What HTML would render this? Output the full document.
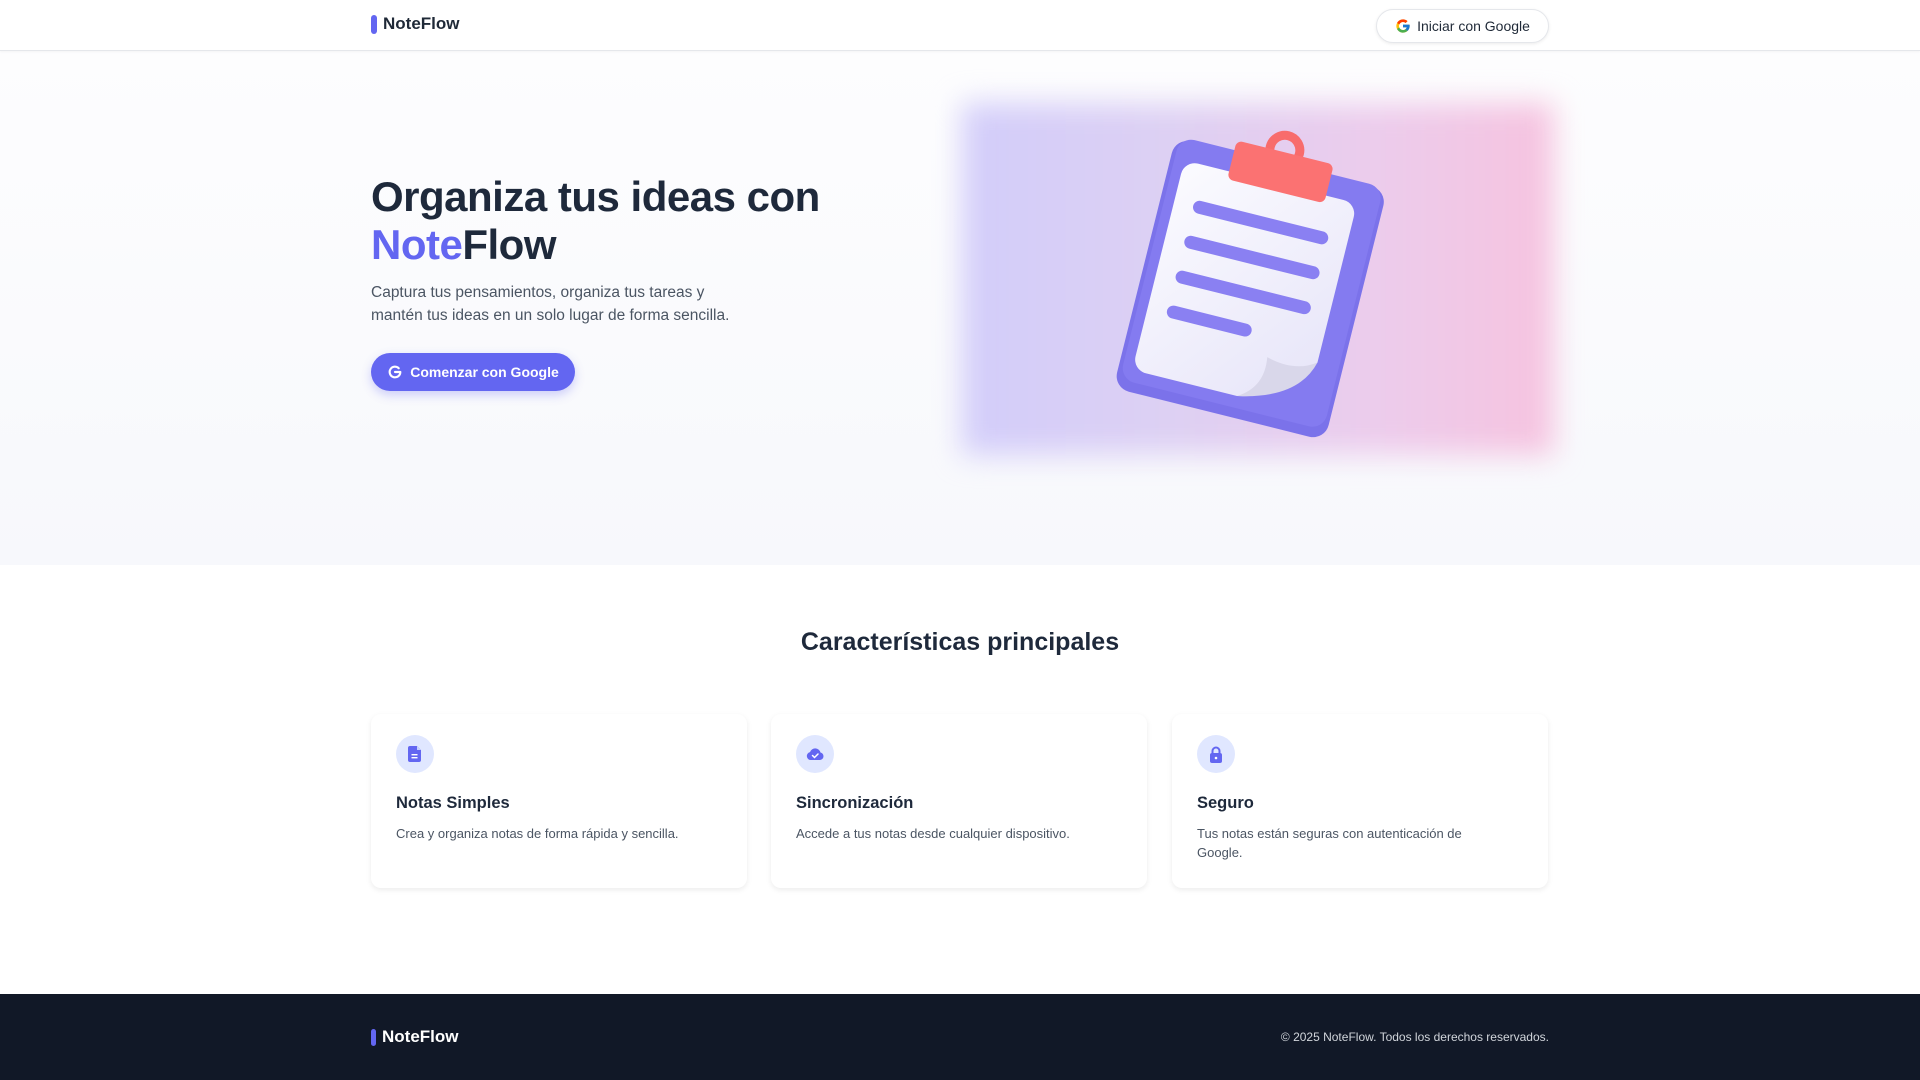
<!DOCTYPE html>
<html><head><meta charset="utf-8"><style>
*{margin:0;padding:0;box-sizing:border-box}
body{width:1920px;height:1080px;overflow:hidden;font-family:"Liberation Sans",sans-serif;background:#fff;color:#1f2937;position:relative}
.nav{position:absolute;left:0;top:0;width:1920px;height:51px;background:#fff;border-bottom:1px solid #e5e7eb;box-shadow:0 1px 2px rgba(0,0,0,.04);z-index:2}
.logo{position:absolute;display:flex;align-items:center;font-weight:bold;font-size:17px;color:#1f2937}
.logo i{display:inline-block;width:6px;height:19px;background:#6366f1;border-radius:3px;margin-right:6px}
.btn1{position:absolute;left:1376px;top:9px;width:173px;height:34px;border:1px solid #e5e7eb;border-radius:17px;background:#fff;box-shadow:0 1px 3px rgba(0,0,0,.08);display:flex;align-items:center;justify-content:center;font-size:14px;color:#1f2937}
.btn1 svg{margin-right:6px}
.hero{position:absolute;left:0;top:51px;width:1920px;height:514px;background:linear-gradient(180deg,#fdfdfe,#f7f8fc)}
h1{position:absolute;left:371px;top:173px;font-size:42px;line-height:48px;font-weight:bold;color:#1e293b;letter-spacing:-0.5px}
h1 span{color:#6366f1}
.p{position:absolute;left:371px;top:282px;font-size:15.5px;line-height:22.5px;color:#4b5563;width:385px}
.cta{position:absolute;left:371px;top:353px;width:204px;height:38px;border-radius:19px;background:#6366f1;color:#fff;font-size:14px;font-weight:bold;display:flex;align-items:center;justify-content:center;box-shadow:0 4px 10px rgba(99,102,241,.3)}
.cta svg{margin-right:7px}
.blur{position:absolute;left:962px;top:103px;width:592px;height:352px;background:linear-gradient(90deg,#d2cdfa 0%,#ddd0f3 35%,#ecccec 70%,#f6c3df 100%);filter:blur(14px)}
h2{position:absolute;left:0;width:1920px;text-align:center;top:628px;font-size:25px;font-weight:bold;color:#1e293b}
.card{position:absolute;top:714px;width:376px;height:174px;background:#fff;border-radius:10px;box-shadow:0 2px 6px rgba(0,0,0,.08)}
.ic{position:absolute;left:25px;top:21px;width:38px;height:38px;border-radius:50%;background:#e0e7ff;display:flex;align-items:center;justify-content:center}
.card h3{position:absolute;left:25px;top:80px;font-size:16.5px;font-weight:bold;color:#1e293b}
.card p{position:absolute;left:25px;top:110px;width:305px;font-size:13px;line-height:19px;color:#4b5563}
.foot{position:absolute;left:0;top:994px;width:1920px;height:86px;background:#111827}
.copy{position:absolute;right:371px;top:36px;font-size:12px;color:#d1d5db}
</style></head><body>
<div class="nav">
<div class="logo" style="left:371px;top:14px;"><i></i>NoteFlow</div>
<div class="btn1"><svg width="16" height="16" viewBox="0 0 48 48"><path fill="#FFC107" d="M43.6 20H24v8h11.3C33.7 32.7 29.3 36 24 36c-6.6 0-12-5.4-12-12s5.4-12 12-12c3 0 5.8 1.1 7.9 3l5.7-5.7C34 6 29.3 4 24 4 13 4 4 13 4 24s9 20 20 20 20-9 20-20c0-1.3-.1-2.7-.4-4z"/><path fill="#FF3D00" d="M6.3 14.7l6.6 4.8C14.7 15.1 19 12 24 12c3 0 5.8 1.1 7.9 3l5.7-5.7C34 6 29.3 4 24 4 16.3 4 9.7 8.3 6.3 14.7z"/><path fill="#4CAF50" d="M24 44c5.2 0 9.9-2 13.4-5.2l-6.2-5.2C29.2 35.1 26.7 36 24 36c-5.2 0-9.6-3.300-11.3-8l-6.5 5C9.5 39.6 16.2 44 24 44z"/><path fill="#1976D2" d="M43.6 20H24v8h11.3c-.8 2.2-2.2 4.2-4.1 5.6l6.2 5.2C37 39.2 44 34 44 24c0-1.300-.1-2.7-.4-4z"/></svg>Iniciar con Google</div>
</div>
<div class="hero">
</div>
<h1>Organiza tus ideas con<br><span>Note</span>Flow</h1>
<div class="p">Captura tus pensamientos, organiza tus tareas y mantén tus ideas en un solo lugar de forma sencilla.</div>
<div class="cta"><svg width="16" height="16" viewBox="0 0 24 24"><path fill="none" stroke="#fff" stroke-width="3.2" stroke-linecap="round" d="M20 12h-8M20 12a8 8 0 1 1-2.4-5.7"/></svg>Comenzar con Google</div>
<div class="blur"></div>
<svg style="position:absolute;left:955px;top:98px" width="600" height="361" viewBox="0 0 600 361">
<defs><linearGradient id="pg" x1="0" y1="0" x2="1" y2="1"><stop offset="0" stop-color="#fbfbff"/><stop offset="1" stop-color="#e6e4f8"/></linearGradient></defs>
<g transform="rotate(14 295 192)">
<rect x="186" y="62" width="218" height="258" rx="16" fill="#7b72ea"/>
<rect x="190" y="60" width="210" height="250" rx="15" fill="#847bf0"/>
<path d="M214 82h150a14 14 0 0 1 14 14v150q-30 45-70 52H214a14 14 0 0 1-14-14V96a14 14 0 0 1 14-14z" fill="url(#pg)"/>
<path d="M378 246q-10 40-70 52q25-15 20-45q30 8 50-7z" fill="#d9d7ea"/>
<g stroke="#8a80f2" stroke-width="13" stroke-linecap="round">
<line x1="226" y1="124" x2="352" y2="124"/><line x1="226" y1="160" x2="352" y2="160"/><line x1="226" y1="196" x2="352" y2="196"/><line x1="226" y1="232" x2="300" y2="232"/>
</g>
<circle cx="295" cy="48" r="15" fill="none" stroke="#f86c6c" stroke-width="9"/>
<rect x="246" y="50" width="100" height="40" rx="6" fill="#fb7272"/>
</g>
</svg>
<h2>Características principales</h2>
<div class="card" style="left:371px"><div class="ic"><svg width="14" height="16" viewBox="0 0 14 16"><path d="M2 0h7l4 4v10a2 2 0 0 1-2 2H2a2 2 0 0 1-2-2V2a2 2 0 0 1 2-2z" fill="#6366f1"/><path d="M9 0v4h4" fill="#c7d2fe"/><rect x="3.5" y="8" width="6" height="1.4" fill="#fff"/><rect x="3.5" y="11" width="6" height="1.4" fill="#fff"/></svg></div><h3>Notas Simples</h3><p>Crea y organiza notas de forma rápida y sencilla.</p></div>
<div class="card" style="left:771px"><div class="ic"><svg width="18" height="14" viewBox="0 0 18 14"><path d="M4.5 13A4 4 0 0 1 4 5.1 5.5 5.5 0 0 1 14.5 5.5 3.8 3.8 0 0 1 14 13z" fill="#6366f1"/><path d="M6.5 8.5l2 2 3.5-3.5" fill="none" stroke="#fff" stroke-width="1.5" stroke-linecap="round"/></svg></div><h3>Sincronización</h3><p>Accede a tus notas desde cualquier dispositivo.</p></div>
<div class="card" style="left:1172px"><div class="ic"><svg width="14" height="17" viewBox="0 0 14 17"><path d="M3.5 7V5a3.5 3.5 0 0 1 7 0v2" fill="none" stroke="#6366f1" stroke-width="2"/><rect x="1" y="7" width="12" height="10" rx="2" fill="#6366f1"/><circle cx="7" cy="12" r="1.3" fill="#fff"/></svg></div><h3>Seguro</h3><p>Tus notas están seguras con autenticación de Google.</p></div>
<div class="foot">
<div class="logo" style="left:371px;top:33px;color:#fff"><i style="width:5px;height:17px"></i>NoteFlow</div>
<div class="copy">© 2025 NoteFlow. Todos los derechos reservados.</div>
</div>
</body></html>
